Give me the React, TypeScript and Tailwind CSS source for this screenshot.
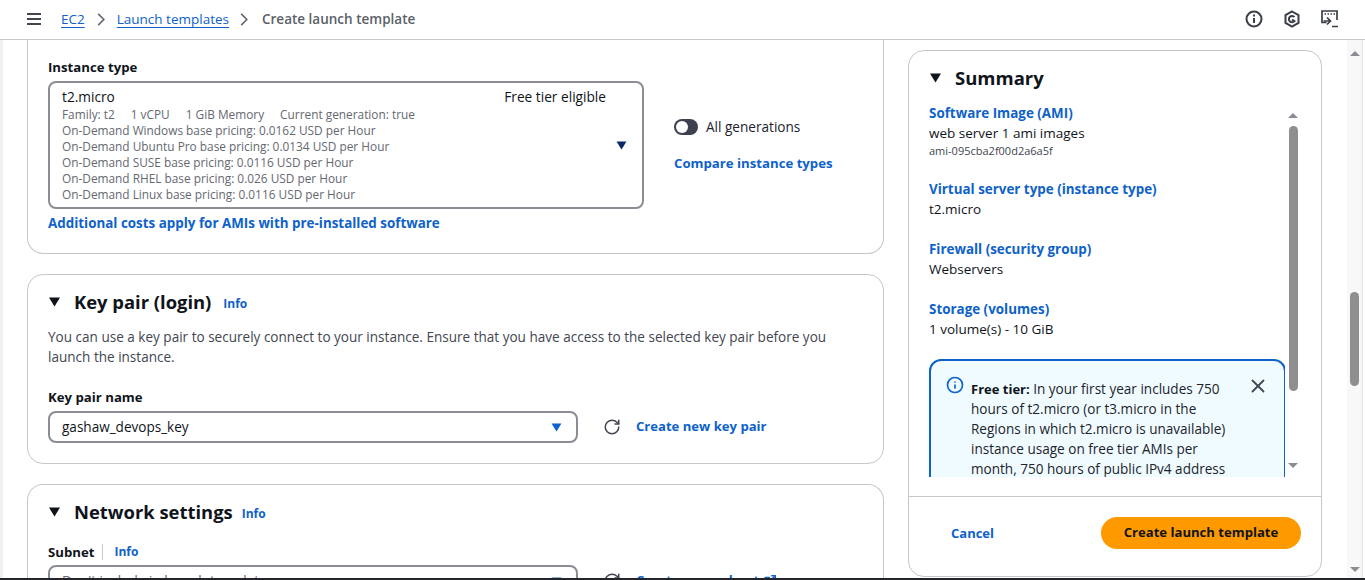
import { ExternalLink, Info, RotateCw, X } from "lucide-react";

const font = { fontFamily: '"Open Sans", "Noto Sans", sans-serif' };

function Caret({ className }: { className: string }) {
  return (
    <svg viewBox="0 0 12 10" className={className} fill="currentColor">
      <path d="M0.5 0.5h11L6 9.5z" />
    </svg>
  );
}

function SectionTitle({ title, infoGap }: { title: string; infoGap: string }) {
  return (
    <div className="flex items-center">
      <Caret className="h-[10px] w-[13px] text-[#0f141a]" />
      <h2 className="ml-[13px] text-[18.400px] leading-[24px] font-bold text-[#0f141a]">{title}</h2>
      <a className={`${infoGap} mt-[4px] text-[12px] leading-[16px] font-bold text-[#0e62c9]`}>Info</a>
    </div>
  );
}

function SummaryItem({ label, value, small }: { label: string; value: string; small?: string }) {
  return (
    <div className="mb-[20px]">
      <a className="block text-[13.400px] leading-[20px] font-bold text-[#0e62c9]">{label}</a>
      <div className="text-[13.500px] leading-[20px] text-[#0f141a]">{value}</div>
      {small && <div className="text-[11px] leading-[16px] text-[#424650]">{small}</div>}
    </div>
  );
}

export default function App() {
  const pricing = [
    "On-Demand Windows base pricing: 0.0162 USD per Hour",
    "On-Demand Ubuntu Pro base pricing: 0.0134 USD per Hour",
    "On-Demand SUSE base pricing: 0.0116 USD per Hour",
    "On-Demand RHEL base pricing: 0.026 USD per Hour",
    "On-Demand Linux base pricing: 0.0116 USD per Hour",
  ];

  return (
    <div style={font} className="flex h-[580px] w-[1365px] flex-col overflow-hidden bg-white text-[#0f141a]">
      <header className="flex h-[40px] shrink-0 items-center border-b border-[#c6c6cd] pb-[1px] pl-[27px] pr-[26px]">
        <svg viewBox="0 0 14 12" className="h-[12px] w-[14px] text-[#424650]" fill="none" stroke="currentColor" strokeWidth="2">
          <path d="M0 1h14M0 6h14M0 11h14" />
        </svg>
        <a className="ml-[20px] text-[13.500px] leading-[20px] text-[#0e62c9] underline underline-offset-[3px]">EC2</a>
        <svg viewBox="0 0 8 14" className="ml-[12px] h-[13px] w-[8px] text-[#656871]" fill="none" stroke="currentColor" strokeWidth="1.8">
          <path d="M1 1l6 6-6 6" />
        </svg>
        <a className="ml-[12px] text-[13.500px] leading-[20px] text-[#0e62c9] underline underline-offset-[3px]">Launch templates</a>
        <svg viewBox="0 0 8 14" className="ml-[11px] h-[13px] w-[8px] text-[#656871]" fill="none" stroke="currentColor" strokeWidth="1.8">
          <path d="M1 1l6 6-6 6" />
        </svg>
        <span className="ml-[14px] text-[13.500px] leading-[20px] font-semibold text-[#5b5f68]">Create launch template</span>
        <div className="ml-auto flex items-center gap-[20px] text-[#3a3e47]">
          <svg viewBox="0 0 18 18" className="h-[18px] w-[18px]" fill="none" stroke="currentColor" strokeWidth="2">
            <circle cx="9" cy="9" r="7.500" />
            <path d="M9 8v5M9 4.500v2" />
          </svg>
          <svg viewBox="0 0 18 18" className="h-[18px] w-[18px]" fill="none" stroke="currentColor" strokeWidth="2">
            <path d="M9 1.500l6.500 3.700v7.600L9 16.500l-6.500-3.700V5.200z" />
            <path d="M11.500 7a3.200 3.200 0 1 0 0 4.200L9 9.500" />
          </svg>
          <svg viewBox="0 0 18 18" className="h-[18px] w-[18px]" fill="none" stroke="currentColor" strokeWidth="1.700">
            <path d="M5.500 12.500H1V1h15v9" />
            <path d="M3.500 4h1.500M6.500 4h1.500M9.500 4h1.500M12.500 4h1.500" />
            <path d="M6 7.500l3.500 3.500L6 14.500M2.500 11h6.500M11 16.500h6" />
          </svg>
        </div>
      </header>

      <div className="flex min-h-0 flex-1 border-l-[3px] border-[#f0f0f2]">
        <main className="w-[881px] shrink-0 overflow-hidden pl-[24px]">
          <section className="-mt-[20px] h-[234px] w-[857px] rounded-b-[16px] border border-t-0 border-[#c6c6cd] pl-[20px] pt-[39px]">
            <div className="text-[13.200px] leading-[16px] font-bold">Instance type</div>
            <div className="flex">
              <div className="mt-[6px]">
                <div className="relative h-[128px] w-[596px] rounded-[8px] border-2 border-[#8c8c94] pl-[12px] pt-[5px]">
                  <div className="flex justify-between pr-[36px] text-[13.700px] leading-[18px]">
                    <span>t2.micro</span>
                    <span>Free tier eligible</span>
                  </div>
                  <div className="flex gap-[16px] text-[11.850px] leading-[16px] text-[#656871]">
                    <span>Family: t2</span>
                    <span>1 vCPU</span>
                    <span>1 GiB Memory</span>
                    <span>Current generation: true</span>
                  </div>
                  {pricing.map((p) => (
                    <div key={p} className="text-[11.850px] leading-[16px] text-[#656871]">
                      {p}
                    </div>
                  ))}
                  <Caret className="absolute right-[15px] top-[58px] h-[9px] w-[11px] text-[#0a2a66]" />
                </div>
                <a className="mt-[5px] block text-[13.400px] leading-[18px] font-bold text-[#0e62c9]">
                  Additional costs apply for AMIs with pre-installed software
                </a>
              </div>
              <div className="ml-[30px] pt-[44px]">
                <div className="flex items-center">
                  <span className="flex h-[16px] w-[24px] items-center rounded-full bg-[#3d4150] pl-[2px]">
                    <span className="h-[12px] w-[12px] rounded-full bg-white" />
                  </span>
                  <span className="ml-[8px] text-[13.600px] leading-[16px] text-[#1b232d]">All generations</span>
                </div>
                <a className="mt-[19px] block text-[13.200px] leading-[18px] font-bold text-[#0e62c9]">Compare instance types</a>
              </div>
            </div>
          </section>

          <section className="mt-[20px] h-[190px] w-[857px] rounded-[16px] border border-[#c6c6cd] pl-[20px] pt-[15px]">
            <SectionTitle title="Key pair (login)" infoGap="ml-[12px]" />
            <p className="mt-[13px] w-[790px] text-[13.550px] leading-[20px] text-[#424650]">
              You can use a key pair to securely connect to your instance. Ensure that you have access to the selected key pair before you launch the instance.
            </p>
            <div className="mt-[22px] text-[13.200px] leading-[16px] font-bold">Key pair name</div>
            <div className="mt-[6px] flex items-center">
              <div className="flex h-[32px] w-[530px] items-center justify-between rounded-[8px] border-2 border-[#8c8c94] pl-[12px] pr-[14px] text-[13.550px]">
                <span>gashaw_devops_key</span>
                <Caret className="h-[9px] w-[11px] text-[#0e62c9]" />
              </div>
              <RotateCw className="ml-[25px] h-[18px] w-[18px] text-[#424650]" strokeWidth={2} />
              <a className="ml-[15px] text-[13.100px] font-bold text-[#0e62c9]">Create new key pair</a>
            </div>
          </section>

          <section className="mt-[20px] h-[120px] w-[857px] rounded-t-[16px] border border-b-0 border-[#c6c6cd] pl-[20px] pt-[15px]">
            <SectionTitle title="Network settings" infoGap="ml-[9px]" />
            <div className="mt-[20px] flex items-center text-[13.200px] leading-[16px]">
              <span className="font-bold">Subnet</span>
              <span className="ml-[8px] h-[16px] border-l border-[#c6c6cd]" />
              <a className="ml-[11px] text-[12px] font-bold text-[#0e62c9]">Info</a>
            </div>
            <div className="mt-[5px] flex items-center">
              <div className="flex h-[32px] w-[530px] items-center justify-between rounded-[8px] border-2 border-[#8c8c94] pl-[12px] pr-[14px] text-[13.550px] text-[#656871]">
                <span>Don't include in launch template</span>
                <Caret className="h-[9px] w-[11px] text-[#0e62c9]" />
              </div>
              <RotateCw className="ml-[25px] h-[18px] w-[18px] text-[#424650]" strokeWidth={2} />
              <a className="ml-[15px] text-[13.100px] font-bold text-[#0e62c9]">Create new subnet</a>
              <ExternalLink className="ml-[4px] h-[14px] w-[14px] text-[#0e62c9]" strokeWidth={2.5} />
            </div>
          </section>
        </main>

        <aside className="ml-[24px] mt-[10px] flex h-[527px] w-[414px] shrink-0 flex-col rounded-[16px] border border-[#c6c6cd]">
          <div className="flex items-center pl-[20px] pt-[15px]">
            <Caret className="h-[10px] w-[13px] text-[#0f141a]" />
            <h2 className="ml-[13px] text-[18.500px] leading-[24px] font-bold">Summary</h2>
          </div>
          <div className="relative mt-[10px] h-[377px] shrink-0 overflow-hidden pl-[20px]">
            <div className="pt-[3px]">
              <SummaryItem label="Software Image (AMI)" value="web server 1 ami images" small="ami-095cba2f00d2a6a5f" />
              <SummaryItem label="Virtual server type (instance type)" value="t2.micro" />
              <SummaryItem label="Firewall (security group)" value="Webservers" />
              <SummaryItem label="Storage (volumes)" value="1 volume(s) - 10 GiB" />
            </div>
            <div className="relative mt-[0px] h-[200px] w-[357px] rounded-[12px] border-2 border-[#0e62c9] bg-[#f0fbff] pl-[40px] pr-[50px] pt-[18px] text-[13.550px] leading-[20px] text-[#1b232d]">
              <Info className="absolute left-[15px] top-[15px] h-[18px] w-[18px] text-[#0e62c9]" strokeWidth={2.25} />
              <p>
                <b className="text-[13px] font-bold text-[#0f141a]">Free tier:</b> In your first year includes 750 hours of t2.micro (or t3.micro in the Regions in which t2.micro is unavailable) instance usage on free tier AMIs per month, 750 hours of public IPv4 address
              </p>
              <X className="absolute right-[15px] top-[14px] h-[22px] w-[22px] text-[#424650]" strokeWidth={2} />
            </div>
            <div className="absolute right-[20px] top-0 flex h-full w-[16px] flex-col items-center bg-white">
              <div className="mt-[13px] h-0 w-0 border-x-[5px] border-b-[5px] border-x-transparent border-b-[#8c8c94]" />
              <div className="mt-[8px] h-[265px] w-[9px] rounded-full bg-[#8f8f8f]" />
              <div className="mt-auto mb-[9px] h-0 w-0 border-x-[5px] border-t-[5px] border-x-transparent border-t-[#8c8c94]" />
            </div>
          </div>
          <div className="mt-[19px] flex flex-1 items-start justify-between border-t border-[#c6c6cd] pl-[42px] pr-[20px] pt-[20px]">
            <a className="mt-[6px] text-[13px] leading-[20px] font-bold text-[#0e62c9]">Cancel</a>
            <button className="h-[32px] w-[200px] rounded-full bg-[#ff9900] text-[13.100px] font-bold text-[#0f141a]">Create launch template</button>
          </div>
        </aside>

        <div className="ml-[25px] flex w-[15px] shrink-0 flex-col items-center bg-[#f8f8f8]">
          <div className="mt-[11px] h-0 w-0 border-x-[5px] border-b-[5px] border-x-transparent border-b-[#8c8c94]" />
          <div className="mt-[236px] h-[94px] w-[9px] rounded-full bg-[#8f8f8f]" />
          <div className="mt-auto mb-[6px] h-0 w-0 border-x-[5px] border-t-[5px] border-x-transparent border-t-[#8c8c94]" />
        </div>
        <div className="w-[3px] shrink-0 border-l border-[#e4e4e8]" />
      </div>
      <div className="h-[2px] shrink-0 bg-[#23252b]" />
    </div>
  );
}
